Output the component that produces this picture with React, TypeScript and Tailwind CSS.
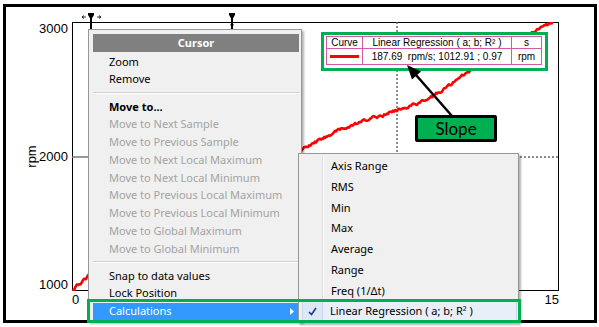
// Cursor context menu over an rpm chart
type Row = { label: string; kind?: "bold" | "off" };

const moveRows: Row[] = [
  { label: "Move to...", kind: "bold" },
  { label: "Move to Next Sample", kind: "off" },
  { label: "Move to Previous Sample", kind: "off" },
  { label: "Move to Next Local Maximum", kind: "off" },
  { label: "Move to Next Local Minimum", kind: "off" },
  { label: "Move to Previous Local Maximum", kind: "off" },
  { label: "Move to Previous Local Minimum", kind: "off" },
  { label: "Move to Global Maximum", kind: "off" },
  { label: "Move to Global Minimum", kind: "off" },
];

const calcRows = ["Axis Range", "RMS", "Min", "Max", "Average", "Range", "Freq (1/\u0394t)"];

// noisy rising trace, in plot coordinates (origin at the plot's top-left corner)
function makeCurve(): string {
  const knots: [number, number][] = [
    [0, 269], [16, 254], [233, 126], [261, 111], [295, 98], [325, 88], [355, 78],
    [375, 65], [395, 51], [415, 38], [441, 25], [461, 11], [481, 0],
  ];
  let seed = 12345;
  const rnd = () => {
    seed = (seed * 16807) % 2147483647;
    return seed / 2147483647 - 0.5;
  };
  const parts: string[] = [];
  let k = 0;
  let drift = 0;
  for (let x = 0; x <= 481; x += 1) {
    while (k < knots.length - 2 && x > knots[k + 1][0]) k++;
    const [x0, y0] = knots[k];
    const [x1, y1] = knots[k + 1];
    const base = y0 + ((y1 - y0) * (x - x0)) / (x1 - x0);
    drift = drift * 0.6 + rnd() * 2.4;
    const y = Math.max(1, base + drift);
    parts.push(`${x === 0 ? "M" : "L"}${x} ${y.toFixed(1)}`);
  }
  return parts.join(" ");
}

function CursorMarkers() {
  return (
    <svg className="absolute -left-px top-[-10px] overflow-visible" width={200} height={17}>
      {/* left cursor with drag arrows */}
      <path d="M10 4 L14 4 M10 4 L12 2.5 M10 4 L12 5.5" stroke="#000" strokeWidth={0.8} fill="none" />
      <path d="M25 4 L29 4 M29 4 L27 2.5 M29 4 L27 5.5" stroke="#000" strokeWidth={0.8} fill="none" />
      <path d="M16 0 L22 0 L22 2 L19.5 6 L18.5 6 L16 2 Z" fill="#000" />
      <rect x={18} y={5} width={2} height={12} fill="#000" />
      {/* right cursor */}
      <path d="M157 0 L163 0 L163 2 L160.5 6 L159.5 6 L157 2 Z" fill="#000" />
      <rect x={159} y={5} width={2} height={12} fill="#000" />
      <rect x={158.5} y={11} width={3} height={1.5} fill="#000" />
    </svg>
  );
}

function ResultTable() {
  return (
    <div className="absolute left-[248px] top-[9px] border-[3px] border-[#00b050] bg-white pl-[2px] pr-[3px] pt-[1px] pb-[3px]">
      <div className="grid grid-cols-[36px_149px_29px] grid-rows-[12px_15px] w-[216px] h-[29px] border border-[#d45aa5] font-['Liberation_Sans',Arial,sans-serif] text-[10px] leading-none text-black">
        <div className="flex items-center justify-center border-r border-b border-[#d45aa5]">Curve</div>
        <div className="flex items-center justify-center border-r border-b border-[#d45aa5] whitespace-nowrap">
          Linear Regression ( a; b; R² )
        </div>
        <div className="flex items-center justify-center border-b border-[#d45aa5]">s</div>
        <div className="flex items-center justify-center border-r border-[#d45aa5]">
          <div className="w-[29px] h-[3px] bg-[#ff0000]" />
        </div>
        <div className="flex items-center justify-center border-r border-[#d45aa5] whitespace-pre">
          187.69  rpm/s; 1012.91 ; 0.97
        </div>
        <div className="flex items-center justify-center">rpm</div>
      </div>
    </div>
  );
}

function CursorMenu() {
  const row = "h-[17.75px] flex items-center ml-[4px] mr-[2px] pl-[16px] whitespace-nowrap";
  const sep = (h: string) => (
    <div className={`${h} flex items-center ml-[4px] mr-[1px]`}>
      <div className="w-full h-[2px] border-t border-[#d2d2d2] border-b border-b-white" />
    </div>
  );
  return (
    <div className="absolute left-[88px] top-[29px] w-[214px] h-[293px] border border-[#979797] bg-[#f0f0f0] shadow-[2px_2px_2px_rgba(0,0,0,0.3)] pt-[4px] font-['Noto_Sans',sans-serif] text-[11px] text-black">
      <div className="h-[18px] ml-[4px] mr-[2px] mb-px bg-[#808080] flex items-center justify-center font-bold text-white">
        Cursor
      </div>
      <div className={row}>Zoom</div>
      <div className={row}>Remove</div>
      {sep("h-[9.5px]")}
      {moveRows.map((r) => (
        <div
          key={r.label}
          className={`${row} ${r.kind === "bold" ? "font-bold" : ""} ${r.kind === "off" ? "text-[#a3a3a3]" : ""}`}
        >
          {r.label}
        </div>
      ))}
      {sep("h-[9.25px]")}
      <div className={row}>Snap to data values</div>
      <div className={row}>Lock Position</div>
      <div className={`${row} bg-[#3399ff] text-white justify-between pr-[5px]`}>
        <span>Calculations</span>
        <svg width={4} height={7} viewBox="0 0 4 7">
          <path d="M0 0 L4 3.5 L0 7 Z" fill="#fff" />
        </svg>
      </div>
    </div>
  );
}

function CalcMenu() {
  return (
    <div className="absolute left-[298px] top-[153px] w-[221px] h-[170px] overflow-hidden border border-[#979797] bg-[#f0f0f0] shadow-[2px_2px_2px_rgba(0,0,0,0.3)] pt-[2px] font-['Noto_Sans',sans-serif] text-[11px] text-black">
      {calcRows.map((l) => (
        <div key={l} className="flex h-[20.75px]">
          <div className="w-[24px] border-r border-[#dcdcdc]" />
          <div className="flex items-center pl-[7px] border-l border-white whitespace-nowrap">{l}</div>
        </div>
      ))}
      <div className="flex h-[20px] ml-[3px] mr-px border border-[#c5d8f0] bg-[#e9eff8] rounded-[2px]">
        <div className="w-[20px] flex items-center justify-center border-r border-[#c5d8f0] bg-[#dde7f5]">
          <svg width={9} height={9} viewBox="0 0 9 9">
            <path d="M1 5 L3.5 7.5 L8 1" stroke="#1e3c8c" strokeWidth={1.6} fill="none" />
          </svg>
        </div>
        <div className="flex items-center pl-[7px] whitespace-nowrap">Linear Regression ( a; b; R² )</div>
      </div>
    </div>
  );
}

export default function App() {
  const curve = makeCurve();
  return (
    <div className="relative w-[599px] h-[327px] overflow-hidden bg-white pt-[4px] pl-[3px]">
      <div className="flex w-[594px] h-[319px] border-[3px] border-black pt-[15px] font-['Liberation_Sans',Arial,sans-serif] text-[13px] text-black">
        <div className="ml-[20px] w-[10px] h-[269px] flex items-center justify-center">
          <span className="-rotate-90 whitespace-nowrap leading-none">rpm</span>
        </div>
        <div className="w-[36px] h-[270px] flex flex-col justify-between items-end pr-[4px] leading-[14px]">
          <span>3000</span>
          <span>2000</span>
          <span>1000</span>
        </div>
        <div className="flex flex-col w-[487px]">
          <div className="relative h-[269px] border border-black">
            <svg className="absolute -left-px -top-px" width={487} height={269}>
              <line x1={0} y1={135} x2={16} y2={135} stroke="#777" strokeWidth={1.5} />
              <line x1={16} y1={135} x2={487} y2={135} stroke="#6a6a6a" strokeWidth={1.5} strokeDasharray="2 2" />
              <line x1={325} y1={0} x2={325} y2={269} stroke="#6a6a6a" strokeWidth={1.5} strokeDasharray="2 2" />
              <path d={curve} stroke="#ff0000" strokeWidth={2.6} fill="none" strokeLinejoin="round" />
            </svg>
            <CursorMarkers />
            <ResultTable />
            <div className="absolute left-[342px] top-[92px] w-[82px] h-[27px] border-[3px] border-black rounded-[2px] bg-[#00b050] flex items-center justify-center font-['Lato',sans-serif] text-[17px] leading-none text-black">
              Slope
            </div>
            <svg className="absolute -left-px -top-px overflow-visible" width={487} height={269}>
              <line x1={380} y1={94} x2={344} y2={53} stroke="#000" strokeWidth={2.5} />
              <path d="M335 43 L349 49.4 L340 57.4 Z" fill="#000" />
            </svg>
          </div>
          <div className="flex justify-between pt-[2px] leading-[14px]">
            <span>0</span>
            <span>15</span>
          </div>
        </div>
      </div>
      <CursorMenu />
      <CalcMenu />
      <div className="absolute left-[87px] top-[299px] w-[434px] h-[24px] border-[3px] border-[#00b050]" />
    </div>
  );
}
